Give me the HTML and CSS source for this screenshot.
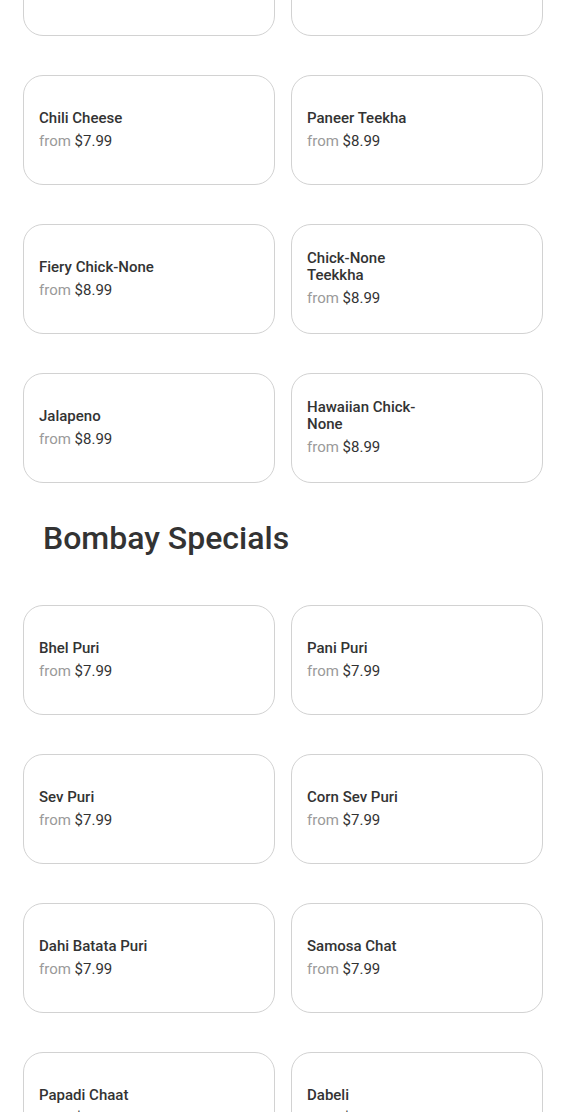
FILE: index.html
```html
<!DOCTYPE html>
<html lang="en">
<head>
  <meta charset="UTF-8">
  <meta name="viewport" content="width=device-width, initial-scale=1">
  <title>Menu</title>
  <link rel="stylesheet" href="styles.css">
</head>
<body>
  <div class="menu">
    <section class="section">
      <div class="grid first">
        <!-- these two are scrolled past the top -->
        <div class="card"></div>
        <div class="card"></div>
        <div class="card"><div class="info"><div class="name">Chili Cheese</div><div class="price"><span class="from">from</span> $7.99</div></div></div>
        <div class="card"><div class="info"><div class="name">Paneer Teekha</div><div class="price"><span class="from">from</span> $8.99</div></div></div>
        <div class="card"><div class="info"><div class="name">Fiery Chick-None</div><div class="price"><span class="from">from</span> $8.99</div></div></div>
        <div class="card"><div class="info"><div class="name">Chick-None Teekkha</div><div class="price"><span class="from">from</span> $8.99</div></div></div>
        <div class="card"><div class="info"><div class="name">Jalapeno</div><div class="price"><span class="from">from</span> $8.99</div></div></div>
        <div class="card"><div class="info"><div class="name">Hawaiian Chick-None</div><div class="price"><span class="from">from</span> $8.99</div></div></div>
      </div>
    </section>

    <section class="section">
      <h2 class="title">Bombay Specials</h2>
      <div class="grid">
        <div class="card"><div class="info"><div class="name">Bhel Puri</div><div class="price"><span class="from">from</span> $7.99</div></div></div>
        <div class="card"><div class="info"><div class="name">Pani Puri</div><div class="price"><span class="from">from</span> $7.99</div></div></div>
        <div class="card"><div class="info"><div class="name">Sev Puri</div><div class="price"><span class="from">from</span> $7.99</div></div></div>
        <div class="card"><div class="info"><div class="name">Corn Sev Puri</div><div class="price"><span class="from">from</span> $7.99</div></div></div>
        <div class="card"><div class="info"><div class="name">Dahi Batata Puri</div><div class="price"><span class="from">from</span> $7.99</div></div></div>
        <div class="card"><div class="info"><div class="name">Samosa Chat</div><div class="price"><span class="from">from</span> $7.99</div></div></div>
        <div class="card"><div class="info"><div class="name">Papadi Chaat</div><div class="price"><span class="from">from</span> $7.99</div></div></div>
        <div class="card"><div class="info"><div class="name">Dabeli</div><div class="price"><span class="from">from</span> $7.99</div></div></div>
      </div>
    </section>
  </div>
</body>
</html>
```

FILE: styles.css
```css
body {
  margin: 0;
  background: #fff;
  font-family: Roboto, "Liberation Sans", sans-serif;
  color: #333;
  overflow: hidden;
}
.menu {
  width: 520px;
  padding-left: 23px;
}
.grid {
  display: grid;
  grid-template-columns: 1fr 1fr;
  column-gap: 16px;
  row-gap: 39px;
}
.grid.first {
  margin-top: -74px;
}
.card {
  height: 108px;
  border: 1px solid #d2d2d2;
  border-radius: 20px;
  display: flex;
  align-items: center;
  padding: 0 15px;
}
.info {
  width: 120px;
}
.name {
  font-size: 15px;
  line-height: 17px;
  font-weight: 500;
  color: #333;
}
.price {
  margin-top: 4px;
  font-size: 15px;
  line-height: 20px;
  color: #333;
}
.from {
  color: #9a9a9a;
}
.title {
  margin: 35px 0 47px 20px;
  font-size: 32px;
  line-height: 40px;
  font-weight: 500;
  color: #333;
}
```
